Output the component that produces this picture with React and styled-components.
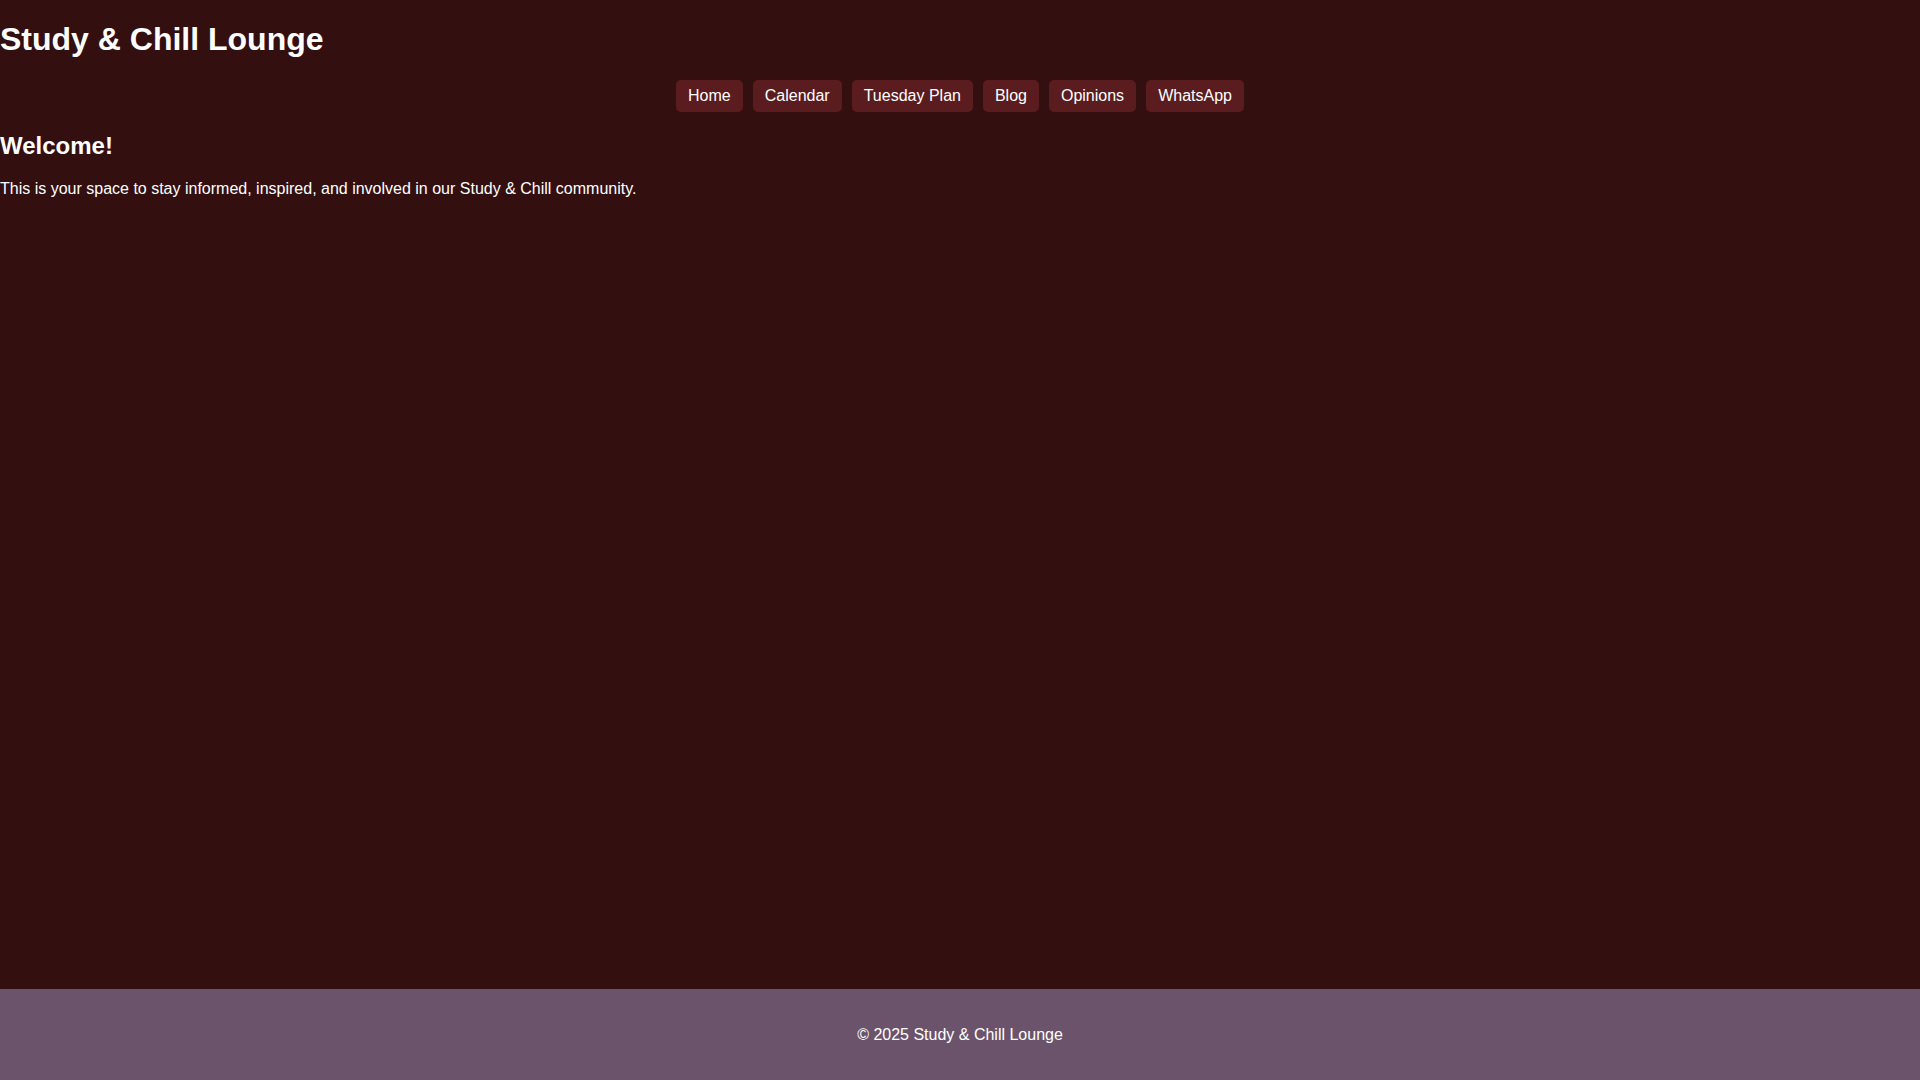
import React from "react";
import styled, { createGlobalStyle } from "styled-components";

const Global = createGlobalStyle`
  body { margin: 0; background: #330f10; color: #fff; font-family: "Liberation Sans", Arial, sans-serif; }
`;
const Page = styled.div`display:flex;flex-direction:column;min-height:100vh;`;
const Main = styled.main`flex:1;`;
const Title = styled.h1`font-size:32px;margin:21.44px 0;`;
const Nav = styled.nav`display:flex;justify-content:center;gap:10px;`;
const NavLink = styled.a`background:#5a1c1f;color:#fff;text-decoration:none;font-size:16px;line-height:18px;padding:7px 12px;border-radius:5px;`;
const H2 = styled.h2`font-size:24px;margin:19.92px 0;`;
const P = styled.p`font-size:16px;margin:16px 0;`;
const Footer = styled.footer`background:#6b546b;text-align:center;padding:37px 0 36px;font-size:16px;line-height:18px;`;

export default function App() {
  const links = ["Home", "Calendar", "Tuesday Plan", "Blog", "Opinions", "WhatsApp"];
  return (
    <Page>
      <Global />
      <Main>
        <Title>Study &amp; Chill Lounge</Title>
        <Nav>{links.map(l => <NavLink key={l} href="#">{l}</NavLink>)}</Nav>
        <H2>Welcome!</H2>
        <P>This is your space to stay informed, inspired, and involved in our Study &amp; Chill community.</P>
      </Main>
      <Footer>© 2025 Study &amp; Chill Lounge</Footer>
    </Page>
  );
}
